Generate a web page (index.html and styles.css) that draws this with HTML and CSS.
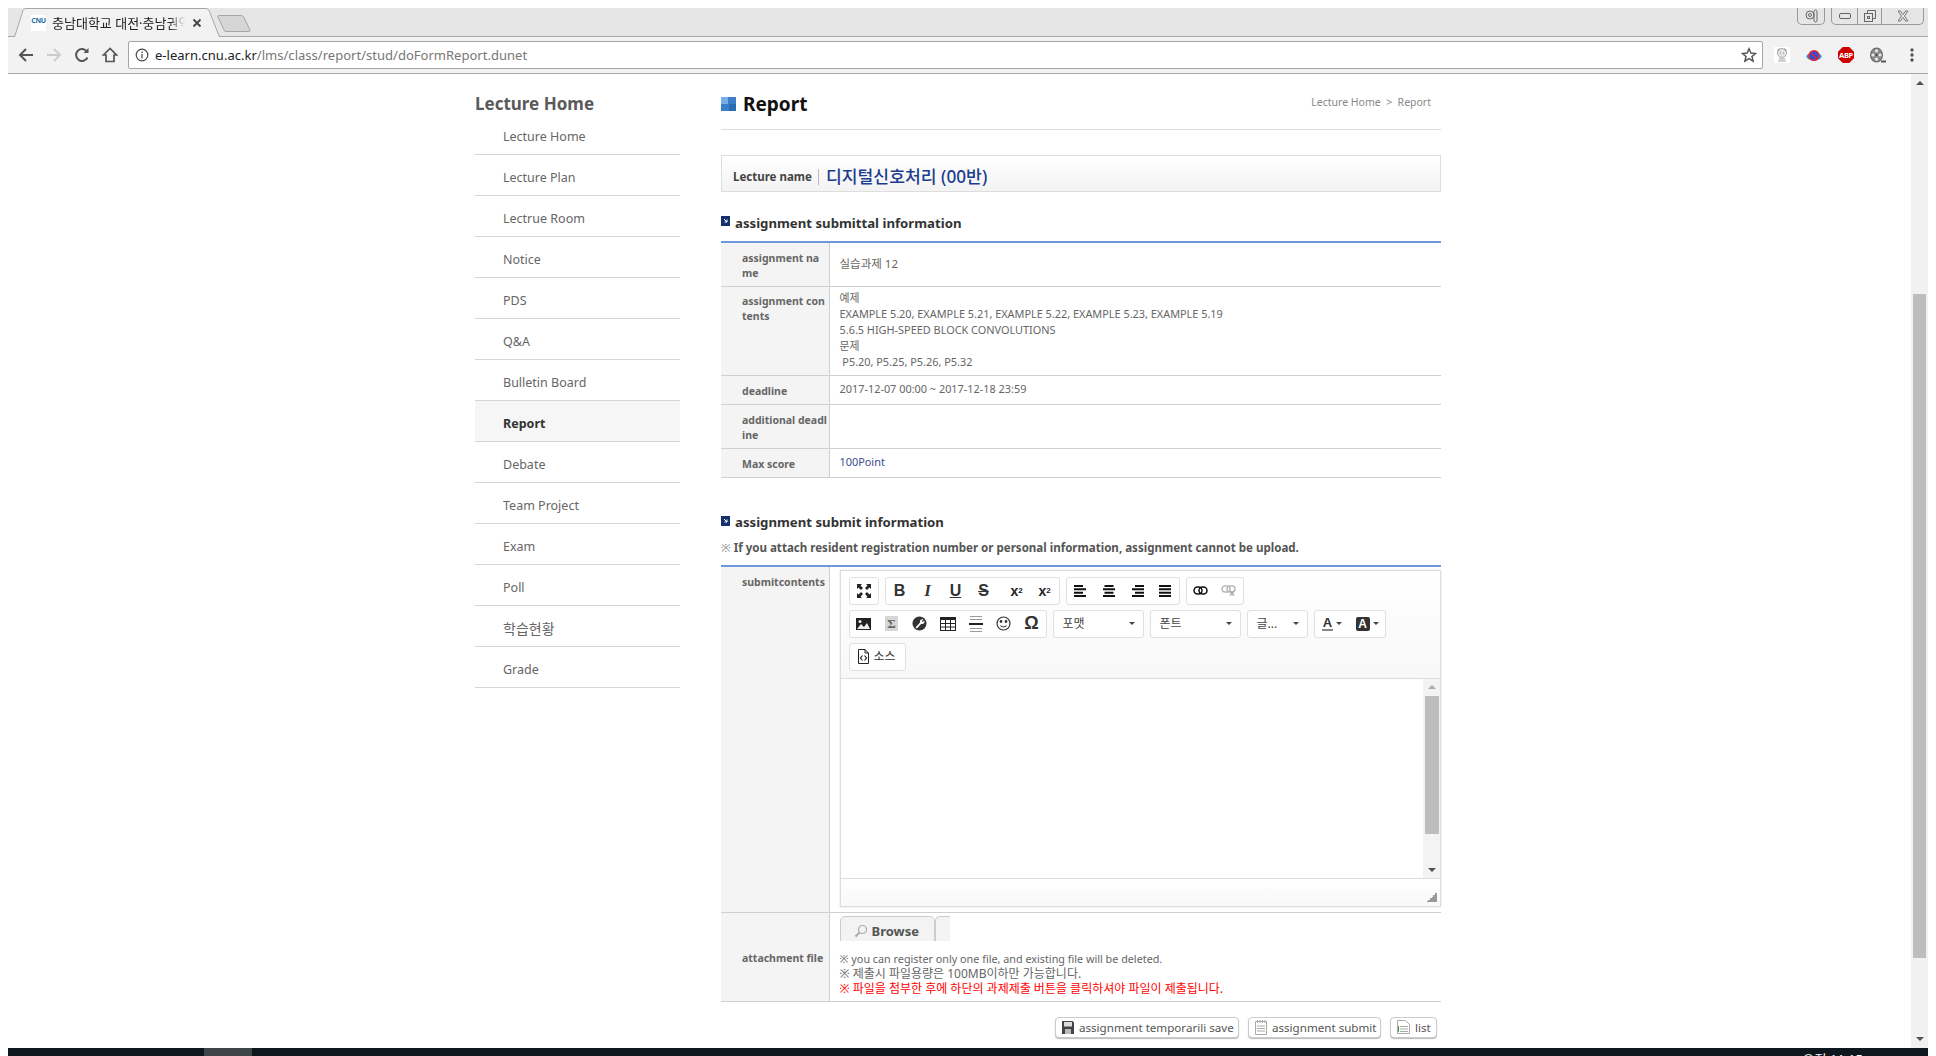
FILE: index.html
```html
<!DOCTYPE html>
<html lang="en">
<head>
    <meta charset="UTF-8">
    <title>충남대학교 대전·충남권</title>
    <link rel="stylesheet" href="styles.css">
</head>
<body>
<div class="screen">

    <div class="tabstrip">
        <div class="tab">
            <svg class="tab-shape" width="206" height="29" viewBox="0 0 206 29"><path d="M.5 29L9 2.500Q10 .5 12 .5H192Q194 .5 195 2.500L205.500 29" fill="#f2f2f2" stroke="#a6a6a6"/></svg>
            <span class="favicon">CNU</span>
            <span class="tab-title">충남대학교 대전·충남권역</span>
            <svg class="tab-close" width="10" height="10" viewBox="0 0 10 10"><path d="M1.500 1.500l7 7M8.500 1.500l-7 7" stroke="#444" stroke-width="1.800"/></svg>
        </div>
        <svg class="newtab" width="34" height="17" viewBox="0 0 34 17"><path d="M1.500.5H24Q26 .5 27 2.500L33 15Q33.500 16.500 32 16.500H9Q7.500 16.500 7 15L1 2Q.5 .5 1.500 .5z" fill="#d6d6d6" stroke="#a6a6a6"/></svg>
        <div class="winbtns">
            <div class="winbox winbox-one">
                <svg width="14" height="14" viewBox="0 0 14 14" fill="none" stroke="#666"><circle cx="6" cy="6" r="4"/><circle cx="6" cy="6" r="1.500"/><rect x="10" y="1" width="3" height="12" rx="1.500"/></svg>
            </div>
            <div class="winbox">
                <span class="winbtn"><svg width="14" height="8" viewBox="0 0 14 8" fill="none" stroke="#666"><rect x="1.500" y="1.500" width="11" height="5" rx="1.500"/></svg></span>
                <span class="winbtn"><svg width="14" height="14" viewBox="0 0 14 14" fill="none" stroke="#666"><rect x="1.500" y="4.500" width="8" height="8"/><path d="M4.500 4.500v-3h8v8h-3"/><rect x="4.500" y="7.500" width="2" height="2"/></svg></span>
                <span class="winbtn"><svg width="14" height="12" viewBox="0 0 14 12" fill="none" stroke="#777"><path d="M2 1h2.500L7 4.500 9.500 1H12L8.500 6 12 11H9.500L7 7.500 4.500 11H2L5.500 6z"/></svg></span>
            </div>
        </div>
    </div>

    <div class="toolbar">
        <svg class="nav-icon" width="16" height="16" viewBox="0 0 16 16" fill="none" stroke="#555" stroke-width="2"><path d="M15 8H2M8 2L2 8l6 6"/></svg>
        <svg class="nav-icon" width="16" height="16" viewBox="0 0 16 16" fill="none" stroke="#ccc" stroke-width="2"><path d="M1 8h13M8 2l6 6-6 6"/></svg>
        <svg class="nav-icon" width="16" height="16" viewBox="0 0 16 16" fill="none" stroke="#555" stroke-width="2"><path d="M13.500 10.500A6 6 0 1 1 13 4.500"/><path d="M14.500 1v5h-5z" fill="#555" stroke="none"/></svg>
        <svg class="nav-icon" width="16" height="16" viewBox="0 0 16 16" fill="none" stroke="#555" stroke-width="1.700"><path d="M8 1.500L1.500 8H4v6.500h8V8h2.500z"/></svg>
        <div class="omnibox">
            <svg width="14" height="14" viewBox="0 0 14 14" fill="none" stroke="#444" stroke-width="1.200"><circle cx="7" cy="7" r="5.800"/><path d="M7 6v4.500M7 3.500v1.500"/></svg>
            <span class="url"><b>e-learn.cnu.ac.kr</b>/lms/class/report/stud/doFormReport.dunet</span>
            <svg class="star" width="16" height="16" viewBox="0 0 16 16" fill="none" stroke="#555" stroke-width="1.500"><path d="M8 1.800l1.900 4.300 4.600.4-3.500 3 1.100 4.600L8 11.700l-4.100 2.400 1.100-4.600-3.500-3 4.600-.4z"/></svg>
        </div>
        <div class="extensions">
            <svg width="16" height="16" viewBox="0 0 16 16"><rect width="16" height="16" fill="#fff"/><circle cx="8" cy="6" r="4.500" fill="#e4e4e4" stroke="#aaa"/><path d="M5 11h6l1 4H4z" fill="#d0d0d0"/><path d="M6 6h1M9 6h1M3.500 4l2-2.500M12.500 4l-2-2.500" stroke="#888"/></svg>
            <svg width="16" height="16" viewBox="0 0 16 16"><ellipse cx="8" cy="9.500" rx="7.500" ry="4" fill="#2a8ae0"/><circle cx="8" cy="8.500" r="4.800" fill="#2a4fd8" stroke="#e8202f" stroke-width="1.500"/><path d="M5 6l6 5.500" stroke="#e8202f" stroke-width="1.500"/></svg>
            <span class="abp">ABP</span>
            <svg width="16" height="16" viewBox="0 0 16 16"><ellipse cx="6.500" cy="8" rx="6.500" ry="7.500" fill="#666"/><ellipse cx="6.500" cy="8" rx="5.500" ry="6.500" fill="#8a8a8a"/><g fill="#e8e8e8"><circle cx="6.500" cy="3.800" r="1.600"/><circle cx="6.500" cy="12.200" r="1.600"/><circle cx="3" cy="8" r="1.600"/><circle cx="10" cy="8" r="1.600"/></g><circle cx="6.500" cy="8" r="1" fill="#333"/><path d="M11 13.500h5V15.500h-5z" fill="#555"/></svg>
            <svg class="dots" width="4" height="16" viewBox="0 0 4 16" fill="#555"><circle cx="2" cy="3" r="1.700"/><circle cx="2" cy="8" r="1.700"/><circle cx="2" cy="13" r="1.700"/></svg>
        </div>
    </div>

    <div class="viewport">
        <div class="page">
            <aside class="sidebar">
                <h2>Lecture Home</h2>
                <ul class="menu">
                    <li>Lecture Home</li>
                    <li>Lecture Plan</li>
                    <li>Lectrue Room</li>
                    <li>Notice</li>
                    <li>PDS</li>
                    <li>Q&amp;A</li>
                    <li>Bulletin Board</li>
                    <li class="active">Report</li>
                    <li>Debate</li>
                    <li>Team Project</li>
                    <li>Exam</li>
                    <li>Poll</li>
                    <li class="kr">학습현황</li>
                    <li>Grade</li>
                </ul>
            </aside>

            <main class="content">
                <div class="title-row">
                    <h1><span class="title-icon"></span>Report</h1>
                    <div class="crumb">Lecture Home &nbsp;&gt;&nbsp; Report</div>
                </div>

                <div class="lecture-box">
                    <span class="lecture-label">Lecture name</span>
                    <span class="lecture-name">디지털신호처리 (00반)</span>
                </div>

                <h3 class="sec-title"><svg class="sec-icon" width="9" height="10" viewBox="0 0 9 10"><rect width="9" height="10" fill="#16306e"/><path d="M3 3l3 3M6 3.500V6H3.500" stroke="#fff" fill="none"/></svg>assignment submittal information</h3>
                <table class="info">
                    <tr class="r44">
                        <th>assignment na<br>me</th>
                        <td class="kr-val">실습과제 12</td>
                    </tr>
                    <tr class="r89">
                        <th class="top">assignment con<br>tents</th>
                        <td class="lines">예제<br>EXAMPLE 5.20, EXAMPLE 5.21, EXAMPLE 5.22, EXAMPLE 5.23, EXAMPLE 5.19<br>5.6.5 HIGH-SPEED BLOCK CONVOLUTIONS<br>문제<br>&nbsp;P5.20, P5.25, P5.26, P5.32</td>
                    </tr>
                    <tr class="r29">
                        <th>deadline</th>
                        <td class="up">2017-12-07 00:00 ~ 2017-12-18 23:59</td>
                    </tr>
                    <tr class="r44">
                        <th>additional deadl<br>ine</th>
                        <td></td>
                    </tr>
                    <tr class="r29">
                        <th>Max score</th>
                        <td class="up points">100Point</td>
                    </tr>
                </table>

                <h3 class="sec-title sec-two"><svg class="sec-icon" width="9" height="10" viewBox="0 0 9 10"><rect width="9" height="10" fill="#16306e"/><path d="M3 3l3 3M6 3.500V6H3.500" stroke="#fff" fill="none"/></svg>assignment submit information</h3>
                <p class="warn"><span class="mark">※</span> If you attach resident registration number or personal information, assignment cannot be upload.</p>
                <table class="info">
                    <tr>
                        <th class="top submit-th">submitcontents</th>
                        <td class="editor-cell">
                            <div class="editor">
                                <div class="ed-tools">
                                    <div class="ed-row">
                                        <div class="ed-group">
                                            <span class="ed-btn"><svg width="14" height="14" viewBox="0 0 14 14" fill="#222"><path d="M0 0h5L3.500 1.500 6 4 4 6 1.500 3.500 0 5zM14 0v5l-1.500-1.500L10 6 8 4l2.500-2.500L9 0zM0 14V9l1.500 1.500L4 8l2 2-2.500 2.500L5 14zM14 14H9l1.500-1.500L8 10l2-2 2.500 2.500L14 9z"/></svg></span>
                                        </div>
                                        <div class="ed-group">
                                            <span class="ed-btn ed-b">B</span>
                                            <span class="ed-btn ed-i">I</span>
                                            <span class="ed-btn ed-u">U</span>
                                            <span class="ed-btn ed-s">S</span>
                                            <span class="ed-btn ed-x ed-x-first">x<sub>2</sub></span>
                                            <span class="ed-btn ed-x">x<sup>2</sup></span>
                                        </div>
                                        <div class="ed-group">
                                            <span class="ed-btn"><svg width="14" height="12" viewBox="0 0 14 12" fill="#111"><path d="M0 0h9v2H0zM0 3.300h12v2H0zM0 6.700h9v2H0zM0 10h12v2H0z"/></svg></span>
                                            <span class="ed-btn"><svg width="14" height="12" viewBox="0 0 14 12" fill="#111"><path d="M2.500 0h9v2h-9zM1 3.300h12v2H1zM2.500 6.700h9v2h-9zM1 10h12v2H1z"/></svg></span>
                                            <span class="ed-btn"><svg width="14" height="12" viewBox="0 0 14 12" fill="#111"><path d="M5 0h9v2H5zM2 3.300h12v2H2zM5 6.700h9v2H5zM2 10h12v2H2z"/></svg></span>
                                            <span class="ed-btn"><svg width="14" height="12" viewBox="0 0 14 12" fill="#111"><path d="M1 0h12v2H1zM1 3.300h12v2H1zM1 6.700h12v2H1zM1 10h12v2H1z"/></svg></span>
                                        </div>
                                        <div class="ed-group">
                                            <span class="ed-btn"><svg width="15" height="9" viewBox="0 0 15 9" fill="none" stroke="#111" stroke-width="1.500"><rect x="1" y="1" width="8" height="7" rx="3.500"/><rect x="6" y="1" width="8" height="7" rx="3.500"/></svg></span>
                                            <span class="ed-btn"><svg width="15" height="11" viewBox="0 0 15 11" fill="none" stroke="#bbb" stroke-width="1.500"><rect x="1" y="1" width="8" height="6" rx="3"/><rect x="6" y="1" width="8" height="6" rx="3"/><path d="M9 6l4 4.500M13 6l-4 4.500" stroke="#aaa"/></svg></span>
                                        </div>
                                    </div>
                                    <div class="ed-row">
                                        <div class="ed-group">
                                            <span class="ed-btn"><svg width="15" height="12" viewBox="0 0 15 12"><rect width="15" height="12" fill="#222"/><path d="M1 11l4-5 3 3 3-4 3 6z" fill="#eee"/><circle cx="4" cy="3.500" r="1.500" fill="#eee"/></svg></span>
                                            <span class="ed-btn"><span class="ed-sigma">Σ</span></span>
                                            <span class="ed-btn"><svg width="15" height="15" viewBox="0 0 15 15"><circle cx="7.500" cy="7.500" r="7" fill="#333"/><path d="M3.500 11.500L8 6.500a2.500 2.500 0 0 1 3.500-3L9.800 5.300l.8.800 1.700-1.600a2.500 2.500 0 0 1-3.200 3.400L5 12.500z" fill="#fff"/></svg></span>
                                            <span class="ed-btn"><svg width="16" height="14" viewBox="0 0 16 14"><rect x=".5" y=".5" width="15" height="13" fill="#fff" stroke="#222"/><path d="M0 0h16v3H0z" fill="#222"/><path d="M5.500 3v10M10.500 3v10M1 6.500h14M1 10h14" stroke="#222"/></svg></span>
                                            <span class="ed-btn"><svg width="14" height="16" viewBox="0 0 14 16"><path d="M1 .5h12M1 3.500h12M1 12.500h12M1 15.500h12" stroke="#999"/><path d="M0 7h14v2H0z" fill="#222"/></svg></span>
                                            <span class="ed-btn"><svg width="15" height="15" viewBox="0 0 15 15" fill="none" stroke="#333" stroke-width="1.200"><circle cx="7.500" cy="7.500" r="6.500"/><path d="M4.500 9.500c1.500 2 4.500 2 6 0"/><circle cx="5" cy="5.500" r=".8" fill="#333"/><circle cx="10" cy="5.500" r=".8" fill="#333"/></svg></span>
                                            <span class="ed-btn ed-omega">Ω</span>
                                        </div>
                                        <div class="ed-combo w-format"><span>포맷</span><i class="caret"></i></div>
                                        <div class="ed-combo w-font"><span>폰트</span><i class="caret"></i></div>
                                        <div class="ed-combo w-size"><span>글...</span><i class="caret"></i></div>
                                        <div class="ed-group">
                                            <span class="ed-btn ed-color"><span class="color-a">A</span><i class="caret"></i></span>
                                            <span class="ed-btn ed-color"><span class="color-bg">A</span><i class="caret"></i></span>
                                        </div>
                                    </div>
                                    <div class="ed-row">
                                        <div class="ed-group">
                                            <span class="ed-btn ed-source"><svg width="11" height="15" viewBox="0 0 11 15" fill="none" stroke="#222"><path d="M.5.500h6.500l3.500 3.500v10.500H.5zM7 .5V4h3.500"/><path d="M4.500 6.500L2.500 9l2 2.500M6.500 6.500l2 2.500-2 2.500" stroke-width="1.200"/></svg><span>소스</span></span>
                                        </div>
                                    </div>
                                </div>
                                <div class="ed-body">
                                    <div class="ed-text"></div>
                                    <div class="ed-scroll">
                                        <i class="arrow-up small"></i>
                                        <div class="ed-thumb"></div>
                                        <i class="arrow-down small"></i>
                                    </div>
                                </div>
                                <div class="ed-foot"><i class="resize"></i></div>
                            </div>
                        </td>
                    </tr>
                    <tr>
                        <th class="attach-th">attachment file</th>
                        <td class="attach-cell">
                            <div class="browse-row">
                                <span class="browse">
                                    <svg width="14" height="14" viewBox="0 0 14 14" fill="none" stroke="#aaa" stroke-width="1.200"><circle cx="8.500" cy="5.500" r="4"/><path d="M5.500 8.500L1.500 12.500" stroke-width="2"/></svg>
                                    Browse
                                </span>
                                <span class="browse-rest"></span>
                            </div>
                            <div class="notes">
                                <p>※ you can register only one file, and existing file will be deleted.</p>
                                <p class="kr-note">※ 제출시 파일용량은 100MB이하만 가능합니다.</p>
                                <p class="kr-note red">※ 파일을 첨부한 후에 하단의 과제제출 버튼을 클릭하셔야 파일이 제출됩니다.</p>
                            </div>
                        </td>
                    </tr>
                </table>

                <div class="actions">
                    <span class="btn w-save"><svg width="12" height="13" viewBox="0 0 12 13"><path d="M0 0h10.500L12 1.500V13H0z" fill="#444"/><path d="M2 1h8v4.500H2z" fill="#ddd"/><path d="M3 8h6v5H3z" fill="#bbb"/></svg>assignment temporarili save</span>
                    <span class="btn w-submit"><svg width="12" height="15" viewBox="0 0 12 15" fill="#fff" stroke="#aaa"><path d="M.5 1.500h11v13H.5z"/><path d="M2.500 0v3M5 0v3M7.500 0v3M10 0v3M2 6h8M2 8.500h8M2 11h8"/></svg>assignment submit</span>
                    <span class="btn w-list"><svg width="13" height="14" viewBox="0 0 13 14" fill="#fff" stroke="#aaa"><path d="M.5.500h8l4 4v9H.5z"/><path d="M3 6.500h8M3 9h8M3 11.500h8"/><path d="M1.500 6v6" stroke="#3a3"/></svg>list</span>
                </div>
            </main>
        </div>

        <div class="scrollbar">
            <i class="arrow-up"></i>
            <div class="thumb"></div>
            <i class="arrow-down"></i>
        </div>
    </div>

    <div class="taskbar">
        <span class="task-active"></span>
        <span class="clock">오전 11:15</span>
    </div>
</div>
</body>
</html>
```

FILE: styles.css
```css
* {
    box-sizing: border-box;
}
html, body {
    margin: 0;
    padding: 0;
    height: 100%;
    overflow: hidden;
    background: #fff;
}
body {
    font-family: "Noto Sans", "Noto Sans CJK KR", sans-serif;
    color: #666;
}
.screen {
    display: flex;
    flex-direction: column;
    width: 1936px;
    height: 1056px;
    padding: 8px 8px 0;
}

/* browser chrome */
.tabstrip {
    display: flex;
    height: 29px;
    background: #e6e6e6;
    border-bottom: 1px solid #a6a6a6;
    flex-shrink: 0;
}
.tab {
    position: relative;
    display: flex;
    align-items: center;
    width: 206px;
    height: 29px;
    margin-left: 6px;
    padding: 0 0 0 17px;
    flex-shrink: 0;
}
.tab-shape {
    position: absolute;
    left: 0;
    top: 0;
}
.favicon, .tab-title, .tab-close {
    position: relative;
}
.favicon {
    width: 15px;
    height: 16px;
    margin-right: 6px;
    background: #fff;
    color: #1f6fa8;
    font-size: 7px;
    font-weight: 700;
    line-height: 11px;
    letter-spacing: -.3px;
    text-align: center;
    overflow: hidden;
    flex-shrink: 0;
}
.tab-title {
    width: 133px;
    font-size: 13px;
    color: #222;
    white-space: nowrap;
    overflow: hidden;
    flex-shrink: 0;
    -webkit-mask-image: linear-gradient(90deg, #000 88%, transparent);
    mask-image: linear-gradient(90deg, #000 88%, transparent);
}
.tab-close {
    margin-left: 7px;
    flex-shrink: 0;
}
.newtab {
    margin: 7px 0 0 -3px;
    flex-shrink: 0;
}
.winbtns {
    display: flex;
    gap: 6px;
    margin-left: auto;
    margin-right: 4px;
    height: 17px;
}
.winbox {
    display: flex;
    border: 1px solid #999;
    border-top: none;
    border-radius: 0 0 5px 5px;
}
.winbox-one {
    width: 28px;
    align-items: center;
    justify-content: center;
}
.winbtn {
    display: flex;
    align-items: center;
    justify-content: center;
    width: 24px;
    border-left: 1px solid #999;
}
.winbtn:first-child {
    width: 25px;
    border-left: none;
}
.winbtn:last-child {
    width: 42px;
}
.toolbar {
    display: flex;
    align-items: center;
    height: 37px;
    padding: 0 0 0 10px;
    background: #f2f2f2;
    border-bottom: 1px solid #a9a9a9;
    flex-shrink: 0;
}
.nav-icon {
    margin-right: 12px;
    flex-shrink: 0;
}
.omnibox {
    display: flex;
    align-items: center;
    width: 1635px;
    height: 28px;
    margin-left: -2px;
    padding: 0 5px 0 6px;
    background: #fff;
    border: 1px solid #a4a4a4;
    border-radius: 2px;
    flex-shrink: 0;
}
.url {
    margin-left: 6px;
    font-size: 13px;
    letter-spacing: .02px;
    color: #777;
}
.url b {
    font-weight: 400;
    color: #222;
}
.star {
    margin-left: auto;
}
.extensions {
    display: flex;
    align-items: center;
    gap: 16px;
    margin-left: 11px;
}
.abp {
    width: 16px;
    height: 16px;
    clip-path: polygon(30% 0, 70% 0, 100% 30%, 100% 70%, 70% 100%, 30% 100%, 0 70%, 0 30%);
    background: #c00;
    color: #fff;
    font-size: 7.5px;
    font-weight: 700;
    line-height: 16px;
    text-align: center;
    letter-spacing: -.3px;
}
.dots {
    margin-left: 8px;
}

/* page */
.viewport {
    display: flex;
    flex: 1;
    min-height: 0;
    background: #fff;
}
.page {
    display: flex;
    flex: 1;
    gap: 41px;
    padding-left: 467px;
    overflow: hidden;
}
.sidebar {
    width: 205px;
    flex-shrink: 0;
}
.sidebar h2 {
    margin: 18px 0 0;
    height: 27px;
    font-size: 17px;
    line-height: 24px;
    font-weight: 700;
    color: #5a5a5a;
}
.menu {
    list-style: none;
    margin: 0;
    padding: 0;
}
.menu li {
    height: 41px;
    padding: 14px 0 0 28px;
    border-bottom: 1px solid #d5d5d5;
    font-size: 12.5px;
    line-height: 18px;
    color: #666;
}
.menu li:first-child {
    height: 36px;
    padding-top: 9px;
}
.menu li.active {
    background: #f6f6f6;
    font-weight: 700;
    color: #333;
}
.menu li.kr {
    font-size: 14px;
}
.content {
    width: 720px;
    flex-shrink: 0;
}
.title-row {
    display: flex;
    justify-content: space-between;
    height: 56px;
    padding: 17px 10px 0 0;
    border-bottom: 1px solid #ddd;
}
.title-row h1 {
    display: flex;
    align-items: flex-start;
    margin: 0;
    font-size: 19px;
    line-height: 27px;
    color: #111;
}
.title-icon {
    width: 15px;
    height: 14px;
    margin: 6px 7px 0 0;
    background: conic-gradient(#3c7fc6 25%, #2a6cb4 0 50%, #3c7fc6 0 75%, #78aee8 0);
}
.crumb {
    margin-top: 3px;
    font-size: 10.5px;
    line-height: 16px;
    color: #888;
}
.lecture-box {
    display: flex;
    align-items: center;
    height: 37px;
    margin-top: 25px;
    padding: 6px 0 0 11px;
    background: linear-gradient(#fff, #f3f3f3);
    border: 1px solid #ddd;
}
.lecture-label {
    padding-right: 6px;
    border-right: 1px solid #bbb;
    font-size: 11.5px;
    font-weight: 700;
    line-height: 16px;
    color: #444;
}
.lecture-name {
    margin-left: 7px;
    font-size: 17.2px;
    font-weight: 500;
    line-height: 20px;
    color: #1b3d8f;
}
.sec-title {
    display: flex;
    align-items: center;
    height: 19px;
    margin: 22px 0 8px;
    padding-bottom: 2px;
    font-size: 13.2px;
    font-weight: 700;
    color: #333;
}
.sec-two {
    margin: 36px 0 6px;
}
.sec-icon {
    margin: -3px 5px 0 0;
    flex-shrink: 0;
}
.warn {
    margin: 0 0 8px;
    font-size: 11.55px;
    line-height: 18px;
    font-weight: 700;
    color: #555;
}
.mark {
    font-weight: 400;
    color: #888;
}
.info {
    width: 100%;
    border-collapse: collapse;
    table-layout: fixed;
    border-top: 2px solid #7097dd;
}
.info th {
    width: 108px;
    padding: 3px 0 0 21px;
    background: #f4f4f4;
    border-bottom: 1px solid #d0d0d0;
    border-right: 1px solid #d0d0d0;
    font-size: 10.5px;
    font-weight: 700;
    line-height: 15px;
    text-align: left;
    white-space: nowrap;
    overflow: hidden;
    color: #666;
}
.info td {
    padding: 0 0 0 10px;
    border-bottom: 1px solid #d0d0d0;
    font-size: 10.9px;
    line-height: 16px;
    color: #666;
}
.info th.top {
    vertical-align: top;
    padding-top: 7px;
}
.r89 { height: 89px; }
.r29 { height: 29px; }
.r44 { height: 44px; }
.info td.kr-val { font-size: 11.5px; }
.info td.lines { vertical-align: top; padding-top: 3px; }
.info td.up { padding-bottom: 2px; }
.info td.points { color: #3b4a8f; }
.info th.submit-th { padding-top: 8px; }
.info th.attach-th { padding-top: 4px; }

/* editor */
.info td.editor-cell {
    padding: 3px 0 5px 10px;
}
.editor {
    border: 1px solid #ddd;
    box-shadow: 0 0 2px #ddd;
}
.ed-tools {
    display: flex;
    flex-direction: column;
    gap: 5px;
    height: 108px;
    padding: 6px 0 0 8px;
    background: linear-gradient(#fff, #f8f8f8);
    border-bottom: 1px solid #ddd;
}
.ed-row {
    display: flex;
    gap: 6px;
    height: 28px;
}
.ed-group {
    display: flex;
    height: 28px;
    border: 1px solid #e0e0e0;
    border-radius: 3px;
    background: #fff;
}
.ed-btn {
    display: flex;
    align-items: center;
    justify-content: center;
    width: 28px;
    height: 26px;
    color: #333;
}
.ed-b {
    font: 700 16px "Liberation Sans", sans-serif;
}
.ed-i {
    font: italic 700 17px "Liberation Serif", serif;
}
.ed-u {
    font: 700 16px "Liberation Sans", sans-serif;
    text-decoration: underline;
}
.ed-s {
    font: 700 16px "Liberation Sans", sans-serif;
    text-decoration: line-through;
}
.ed-x {
    font: 700 14px "Liberation Sans", sans-serif;
    color: #222;
}
.ed-x-first {
    margin-left: 5px;
}
.ed-x sub, .ed-x sup {
    font-size: 8px;
}
.ed-sigma {
    width: 13px;
    height: 15px;
    background: #d6d6d6;
    font: 700 13px/15px "Liberation Serif", serif;
    text-align: center;
    color: #666;
}
.ed-omega {
    font: 700 18px "Liberation Sans", sans-serif;
}
.ed-combo {
    display: flex;
    align-items: center;
    justify-content: space-between;
    height: 28px;
    padding: 0 8px 0 9px;
    border: 1px solid #e0e0e0;
    border-radius: 3px;
    background: #fff;
    font-size: 12px;
    color: #444;
}
.w-format { width: 91px; }
.w-font { width: 91px; }
.w-size { width: 61px; }
.caret {
    width: 0;
    height: 0;
    border: 3px solid transparent;
    border-top: 3px solid #444;
    border-bottom: none;
}
.ed-color {
    width: 35px;
    gap: 3px;
}
.color-a {
    font: 700 13px/13px "Liberation Sans", sans-serif;
    border-bottom: 2px solid #888;
    padding: 0 1px;
}
.color-bg {
    width: 14px;
    height: 14px;
    background: #333;
    border-radius: 2px;
    color: #fff;
    font: 700 12px/14px "Liberation Sans", sans-serif;
    text-align: center;
}
.ed-source {
    width: 55px;
    gap: 4px;
    font-size: 12px;
}
.ed-body {
    display: flex;
    height: 200px;
    border-bottom: 1px solid #ddd;
}
.ed-text {
    flex: 1;
    background: #fff;
}
.ed-scroll {
    display: flex;
    flex-direction: column;
    align-items: center;
    width: 17px;
    padding: 6px 0;
    background: #f3f3f3;
}
.ed-thumb {
    flex: 0 0 138px;
    width: 14px;
    margin: 7px 0 0;
    background: #bdbdbd;
}
.ed-foot {
    display: flex;
    align-items: flex-end;
    justify-content: flex-end;
    height: 27px;
    padding: 0 3px 4px 0;
    background: linear-gradient(#fff, #f8f8f8);
}
.resize {
    width: 10px;
    height: 10px;
    background: linear-gradient(135deg, transparent 50%, #999 50%);
}

/* arrows */
.arrow-up, .arrow-down {
    width: 0;
    height: 0;
    border: 4px solid transparent;
    flex-shrink: 0;
}
.arrow-up {
    border-bottom: 4px solid #505050;
    border-top: none;
}
.arrow-down {
    border-top: 4px solid #505050;
    border-bottom: none;
    margin-top: auto;
}
.ed-scroll .arrow-up {
    border-bottom-color: #aaa;
}

/* attachment */
.info td.attach-cell {
    padding: 3px 0 0 10px;
    height: 89px;
    vertical-align: top;
}
.browse-row {
    display: flex;
    height: 25px;
    overflow: hidden;
}
.browse {
    display: flex;
    align-items: center;
    gap: 4px;
    width: 95px;
    height: 30px;
    padding: 0 0 0 13px;
    background: #f3f3f3;
    border: 1px solid #ccc;
    border-radius: 5px 5px 0 0;
    font-size: 13px;
    font-weight: 700;
    color: #555;
}
.browse-rest {
    width: 15px;
    height: 30px;
    background: #f3f3f3;
    border: 1px solid #ccc;
    border-right: none;
    border-radius: 5px 0 0 0;
}
.notes {
    margin-top: 10px;
}
.notes p {
    margin: 0;
    font-size: 10.8px;
    line-height: 15px;
}
.notes .kr-note {
    font-size: 12px;
}
.notes .red {
    color: #f00;
}

/* buttons */
.actions {
    display: flex;
    justify-content: flex-end;
    gap: 9px;
    margin-top: 15px;
    padding-right: 4px;
}
.btn {
    display: flex;
    align-items: center;
    gap: 5px;
    height: 21px;
    padding: 0 0 0 6px;
    background: #fff;
    border: 1px solid #ccc;
    border-radius: 4px;
    box-shadow: 0 1px 1px #bbb;
    font-size: 11.6px;
    color: #555;
    white-space: nowrap;
    overflow: hidden;
}
.w-save { width: 184px; }
.w-submit { width: 133px; }
.w-list { width: 47px; }

/* page scrollbar */
.scrollbar {
    display: flex;
    flex-direction: column;
    align-items: center;
    width: 17px;
    padding: 7px 0 7px;
    background: #f1f1f1;
    flex-shrink: 0;
}
.thumb {
    flex: 0 0 664px;
    width: 13px;
    margin-top: 209px;
    background: #bdbdbd;
}

/* windows taskbar */
.taskbar {
    display: flex;
    height: 8px;
    background: #0d171d;
    overflow: hidden;
    flex-shrink: 0;
}
.task-active {
    width: 48px;
    margin-left: 196px;
    background: #3d4548;
}
.clock {
    margin-left: auto;
    margin-right: 65px;
    padding-top: 2px;
    font-size: 13px;
    line-height: 18px;
    color: #fff;
}
```
